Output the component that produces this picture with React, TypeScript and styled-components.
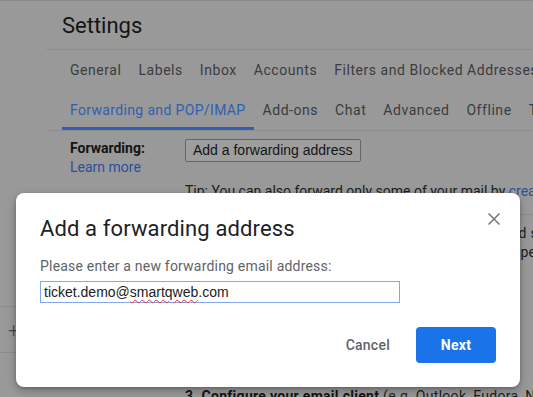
import React from 'react';
import styled, { createGlobalStyle } from 'styled-components';

const GlobalStyle = createGlobalStyle`
  html, body {
    margin: 0;
    padding: 0;
    background: #999999;
  }
  * {
    box-sizing: border-box;
  }
`;

const Screen = styled.div`
  position: relative;
  width: 533px;
  height: 397px;
  overflow: hidden;
  background: #999999;
  border-top: 1px solid #8a8a8a;
  font-family: Roboto, 'Liberation Sans', Arial, sans-serif;
  font-size: 14px;
  color: #141414;
`;

const Layout = styled.div`
  display: grid;
  grid-template-columns: 46px 1fr;
  height: 100%;
`;

const Sidebar = styled.div`
  padding-top: 305px;
`;

const SideBlock = styled.div`
  height: 47px;
  border-top: 1px solid #8c8c8c;
  border-bottom: 1px solid #8c8c8c;
  display: flex;
  align-items: center;
  padding-left: 8px;
  color: #444;
  font-size: 20px;
  font-weight: 300;
`;

const Main = styled.div`
  min-width: 0;
`;

const Header = styled.div`
  height: 49px;
  padding: 11px 0 0 16px;
  border-bottom: 1px solid #8d8d8d;
  font-size: 22px;
  line-height: 28px;
  color: #141414;
`;

const TabStrip = styled.div`
  padding-left: 16px;
  border-bottom: 1px solid #8d8d8d;
`;

const TabRow = styled.div`
  display: flex;
  gap: 1px;
  white-space: nowrap;
`;

const Tab = styled.div<{ $active?: boolean }>`
  height: 40px;
  line-height: 40px;
  padding: 0 8px;
  font-size: 14px;
  letter-spacing: ${(p) => (p.$active ? '0.35px' : '0.55px')};
  color: ${(p) => (p.$active ? '#2f5fb3' : '#3b3c3e')};
  box-shadow: ${(p) => (p.$active ? 'inset 0 -3px 0 #2f5fb3' : 'none')};
`;

const Content = styled.div`
  padding-left: 24px;
`;

const Section = styled.div<{ $pt: number; $pb: number; $rule?: boolean }>`
  display: grid;
  grid-template-columns: 115px 1fr;
  padding: ${(p) => p.$pt}px 0 ${(p) => p.$pb}px;
  border-bottom: ${(p) => (p.$rule ? '1px solid #8d8d8d' : 'none')};
  line-height: 19px;
`;

const LabelCol = styled.div`
  display: flex;
  flex-direction: column;
`;

const FieldName = styled.span`
  font-weight: 700;
  color: #141414;
`;

const Link = styled.span`
  color: #2c4f9c;
`;

const ValueCol = styled.div`
  white-space: nowrap;
  color: #1c1c1c;
`;

const OldButton = styled.div`
  display: inline-block;
  height: 23px;
  line-height: 21px;
  padding: 0 7px;
  border: 1px solid #666;
  border-radius: 2px;
  background: #9e9e9e;
  color: #151515;
  font-family: 'Liberation Sans', Arial, sans-serif;
`;

const Line = styled.div<{ $mt?: number; $ls?: number }>`
  margin-top: ${(p) => p.$mt ?? 0}px;
  letter-spacing: ${(p) => p.$ls ?? 0}px;
  display: flex;
  align-items: center;
  gap: 6px;
`;

const Radio = styled.span`
  width: 13px;
  height: 13px;
  border: 1px solid #555;
  border-radius: 50%;
  margin-left: 2px;
`;

const Strong = styled.b`
  font-weight: 700;
  color: #141414;
`;

const Dialog = styled.div`
  position: absolute;
  left: 16px;
  top: 192px;
  width: 504px;
  height: 194px;
  padding: 22px 24px 23px;
  background: #ffffff;
  border-radius: 8px;
  box-shadow: 0 4px 10px rgba(0, 0, 0, 0.25), 0 1px 3px rgba(0, 0, 0, 0.2);
  display: flex;
  flex-direction: column;
`;

const Close = styled.button`
  position: absolute;
  top: 20px;
  right: 20px;
  width: 12px;
  height: 12px;
  padding: 0;
  border: none;
  background: none;
  display: flex;
`;

const DialogTitle = styled.div`
  font-size: 22px;
  line-height: 28px;
  letter-spacing: 0.12px;
  color: #202124;
`;

const Prompt = styled.div`
  margin-top: 13px;
  font-size: 14px;
  line-height: 20px;
  letter-spacing: 0.2px;
  color: #5f6368;
`;

const FakeInput = styled.div`
  margin-top: 5px;
  width: 360px;
  height: 22px;
  padding: 0 3px;
  border: 1px solid #82a9ef;
  font-family: 'Liberation Sans', Arial, sans-serif;
  font-size: 14px;
  line-height: 20px;
  color: #202124;
  white-space: nowrap;
`;

const Misspelled = styled.span`
  text-decoration: underline wavy #e53935;
  text-decoration-thickness: 1px;
  text-underline-offset: 2px;
`;

const Actions = styled.div`
  margin-top: 24px;
  display: flex;
  justify-content: flex-end;
  gap: 10px;
`;

const ActionButton = styled.button<{ $primary?: boolean }>`
  height: 36px;
  padding: 0 ${(p) => (p.$primary ? '24px' : '16px')};
  min-width: ${(p) => (p.$primary ? '80px' : '0')};
  border: none;
  border-radius: 4px;
  font-family: Roboto, 'Liberation Sans', Arial, sans-serif;
  font-size: 14px;
  font-weight: ${(p) => (p.$primary ? 700 : 500)};
  letter-spacing: 0.25px;
  background: ${(p) => (p.$primary ? '#1a73e8' : 'transparent')};
  color: ${(p) => (p.$primary ? '#ffffff' : '#5f6368')};
`;

const App: React.FC = () => {
  return (
    <>
      <GlobalStyle />
      <Screen>
        <Layout>
          <Sidebar>
            <SideBlock>+</SideBlock>
          </Sidebar>
          <Main>
            <Header>Settings</Header>
            <TabStrip>
              <TabRow>
                <Tab>General</Tab>
                <Tab>Labels</Tab>
                <Tab>Inbox</Tab>
                <Tab>Accounts</Tab>
                <Tab>Filters and Blocked Addresses</Tab>
              </TabRow>
              <TabRow>
                <Tab $active>Forwarding and POP/IMAP</Tab>
                <Tab>Add-ons</Tab>
                <Tab>Chat</Tab>
                <Tab>Advanced</Tab>
                <Tab>Offline</Tab>
                <Tab>Themes</Tab>
              </TabRow>
            </TabStrip>
            <Content>
              <Section $pt={8} $pb={13} $rule>
                <LabelCol>
                  <FieldName>Forwarding:</FieldName>
                  <Link>Learn more</Link>
                </LabelCol>
                <ValueCol>
                  <OldButton>Add a forwarding address</OldButton>
                  <Line $mt={20}>
                    <span>
                      Tip: You can also forward only some of your mail by <Link>creating a filter!</Link>
                    </span>
                  </Line>
                </ValueCol>
              </Section>
              <Section $pt={9} $pb={0}>
                <LabelCol>
                  <FieldName>POP download:</FieldName>
                  <Link>Learn more</Link>
                </LabelCol>
                <ValueCol>
                  <Line $ls={0.3}>1. Status: POP is enabled for all mail that has arrived since 10:22 AM</Line>
                  <Line $ls={0.15}>
                    <Radio />
                    Enable POP for all mail (even mail that's already opened)
                  </Line>
                  <Line>
                    <Radio />
                    Enable POP for mail that arrives from now on
                  </Line>
                  <Line>
                    <Radio />
                    Disable POP
                  </Line>
                  <Line $mt={14}>2. When messages are accessed with POP</Line>
                  <Line $mt={54} $ls={0.3}>
                    <span>
                      <Strong>3. Configure your email client</Strong> (e.g. Outlook, Eudora, Netscape Mail)
                    </span>
                  </Line>
                </ValueCol>
              </Section>
            </Content>
          </Main>
        </Layout>

        <Dialog>
          <Close aria-label="Close">
            <svg width="12" height="12" viewBox="0 0 12 12">
              <path d="M0.5 0.5 L11.5 11.5 M11.5 0.5 L0.5 11.5" stroke="#757575" strokeWidth="1.5" />
            </svg>
          </Close>
          <DialogTitle>Add a forwarding address</DialogTitle>
          <Prompt>Please enter a new forwarding email address:</Prompt>
          <FakeInput>
            ticket.demo@<Misspelled>smartqweb</Misspelled>.com
          </FakeInput>
          <Actions>
            <ActionButton>Cancel</ActionButton>
            <ActionButton $primary>Next</ActionButton>
          </Actions>
        </Dialog>
      </Screen>
    </>
  );
};

export default App;
